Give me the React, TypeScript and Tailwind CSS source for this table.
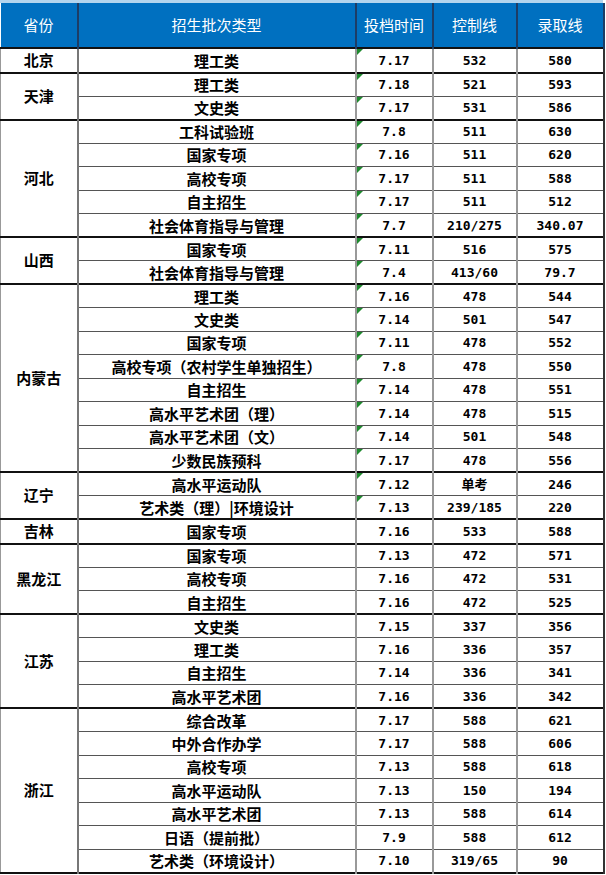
import React from "react";

type Row = {
  kind: string;
  time: string;
  control: string;
  admit: string;
};

type Group = {
  province: string;
  flagged: boolean; // green corner marker on the time cell
  rows: Row[];
};

const r = (kind: string, time: string, control: string, admit: string): Row => ({ kind, time, control, admit });

const groups: Group[] = [
  { province: "北京", flagged: true, rows: [r("理工类", "7.17", "532", "580")] },
  {
    province: "天津",
    flagged: true,
    rows: [r("理工类", "7.18", "521", "593"), r("文史类", "7.17", "531", "586")],
  },
  {
    province: "河北",
    flagged: true,
    rows: [
      r("工科试验班", "7.8", "511", "630"),
      r("国家专项", "7.16", "511", "620"),
      r("高校专项", "7.17", "511", "588"),
      r("自主招生", "7.17", "511", "512"),
      r("社会体育指导与管理", "7.7", "210/275", "340.07"),
    ],
  },
  {
    province: "山西",
    flagged: true,
    rows: [r("国家专项", "7.11", "516", "575"), r("社会体育指导与管理", "7.4", "413/60", "79.7")],
  },
  {
    province: "内蒙古",
    flagged: true,
    rows: [
      r("理工类", "7.16", "478", "544"),
      r("文史类", "7.14", "501", "547"),
      r("国家专项", "7.11", "478", "552"),
      r("高校专项（农村学生单独招生）", "7.8", "478", "550"),
      r("自主招生", "7.14", "478", "551"),
      r("高水平艺术团（理）", "7.14", "478", "515"),
      r("高水平艺术团（文）", "7.14", "501", "548"),
      r("少数民族预科", "7.17", "478", "556"),
    ],
  },
  {
    province: "辽宁",
    flagged: true,
    rows: [r("高水平运动队", "7.12", "单考", "246"), r("艺术类（理）|环境设计", "7.13", "239/185", "220")],
  },
  { province: "吉林", flagged: false, rows: [r("国家专项", "7.16", "533", "588")] },
  {
    province: "黑龙江",
    flagged: false,
    rows: [
      r("国家专项", "7.13", "472", "571"),
      r("高校专项", "7.16", "472", "531"),
      r("自主招生", "7.16", "472", "525"),
    ],
  },
  {
    province: "江苏",
    flagged: false,
    rows: [
      r("文史类", "7.15", "337", "356"),
      r("理工类", "7.16", "336", "357"),
      r("自主招生", "7.14", "336", "341"),
      r("高水平艺术团", "7.16", "336", "342"),
    ],
  },
  {
    province: "浙江",
    flagged: false,
    rows: [
      r("综合改革", "7.17", "588", "621"),
      r("中外合作办学", "7.17", "588", "606"),
      r("高校专项", "7.13", "588", "618"),
      r("高水平运动队", "7.13", "150", "194"),
      r("高水平艺术团", "7.13", "588", "614"),
      r("日语（提前批）", "7.9", "588", "612"),
      r("艺术类（环境设计）", "7.10", "319/65", "90"),
    ],
  },
];

const cjk = "font-['Noto_Sans_CJK_SC','Noto_Sans',sans-serif]";
const mono = "font-['DejaVu_Sans_Mono','Noto_Sans_CJK_SC',monospace]";

export default function App() {
  return (
    <div className="w-[606px] min-h-[875px] bg-white">
      <div className="h-[3px] w-[603px] bg-[#b3d5ee]" />
      <table className="w-[603px] table-fixed border-collapse">
        <colgroup>
          <col className="w-[77px]" />
          <col className="w-[278px]" />
          <col className="w-[77px]" />
          <col className="w-[84px]" />
          <col className="w-[87px]" />
        </colgroup>
        <thead>
          <tr className={`h-[45px] bg-[#0070c0] text-[15px] text-white ${cjk}`}>
            <th className="border-r-2 border-[#1d3d66] font-normal">省份</th>
            <th className="border-r-2 border-[#1d3d66] font-normal">招生批次类型</th>
            <th className="border-r-2 border-[#1d3d66] font-normal">投档时间</th>
            <th className="border-r-2 border-[#1d3d66] font-normal">控制线</th>
            <th className="border-r-2 border-[#1d3d66] font-normal">录取线</th>
          </tr>
        </thead>
        <tbody className="text-black">
          {groups.map((g) =>
            g.rows.map((row, i) => {
              const top = i === 0 ? "border-t-2 border-t-[#111]" : "border-t border-t-[#555]";
              return (
                <tr key={g.province + i} className="h-[23.5px]">
                  {i === 0 && (
                    <td
                      rowSpan={g.rows.length}
                      className={`border-t-2 border-t-[#111] border-l border-l-[#999] border-r-2 border-r-[#777] text-center text-[15px] font-semibold ${cjk}`}
                    >
                      {g.province}
                    </td>
                  )}
                  <td className={`${top} border-r-2 border-r-[#999] p-0 text-center text-[15px] font-semibold leading-none ${cjk}`}>
                    {row.kind}
                  </td>
                  <td className={`${top} relative border-r-2 border-r-[#999] p-0 text-center text-[13px] font-bold leading-none ${mono}`}>
                    {g.flagged && (
                      <span className="absolute left-0 top-0 h-0 w-0 border-r-[6px] border-t-[6px] border-r-transparent border-t-[#1e8a2e]" />
                    )}
                    {row.time}
                  </td>
                  <td className={`${top} border-r-2 border-r-[#999] p-0 text-center text-[13px] font-bold leading-none ${mono}`}>
                    {row.control}
                  </td>
                  <td className={`${top} border-r-2 border-r-[#333] p-0 text-center text-[13px] font-bold leading-none ${mono}`}>
                    {row.admit}
                  </td>
                </tr>
              );
            })
          )}
          <tr>
            <td colSpan={5} className="h-0 border-t-2 border-t-[#111] p-0" />
          </tr>
        </tbody>
      </table>
    </div>
  );
}
